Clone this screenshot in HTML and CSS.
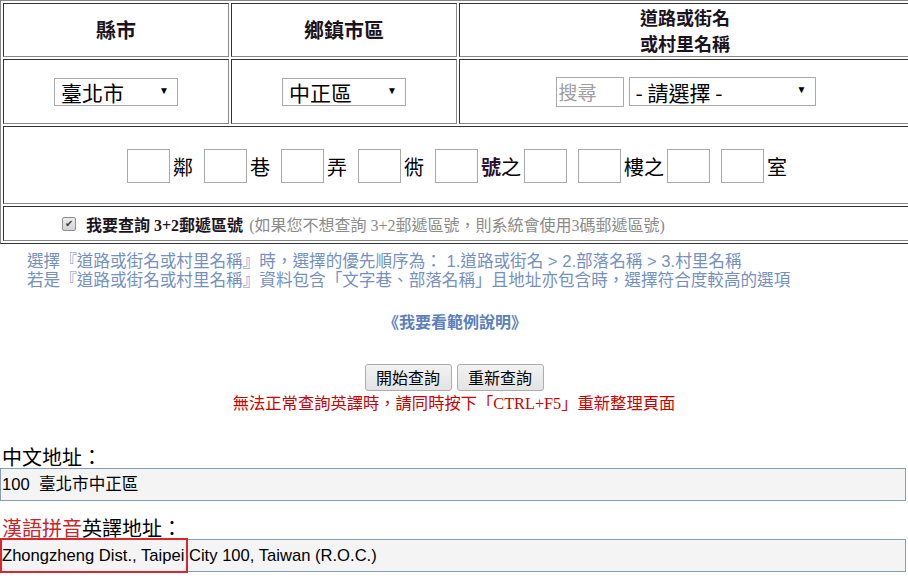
FILE: index.html
```html
<html lang="zh-Hant">

<head>
    <meta charset="UTF-8">
    <meta name="viewport" content="width=device-width, initial-scale=1.0">
    <title>郵遞區號查詢</title>
    <link rel="stylesheet" href="styles.css">
</head>

<body>
    <div class="frame">
        <table class="zip">
            <tr class="head">
                <th class="col-city">縣市</th>
                <th class="col-area">鄉鎮市區</th>
                <th class="col-road">
                    <div class="two-line">
                        <span>道路或街名</span>
                        <span>或村里名稱</span>
                    </div>
                </th>
            </tr>
            <tr class="pick">
                <td>
                    <span class="sel sel-short">
                        <select>
                            <option>臺北市</option>
                        </select>
                    </span>
                </td>
                <td>
                    <span class="sel sel-short">
                        <select>
                            <option>中正區</option>
                        </select>
                    </span>
                </td>
                <td>
                    <div class="road">
                        <input class="search" type="text" placeholder="搜尋">
                        <span class="sel sel-long">
                            <select>
                                <option>- 請選擇 -</option>
                            </select>
                        </span>
                    </div>
                </td>
            </tr>
            <tr class="detail">
                <td colspan="3">
                    <div class="parts">
                        <span class="unit"><input class="box" type="text">鄰</span>
                        <span class="unit"><input class="box" type="text">巷</span>
                        <span class="unit"><input class="box" type="text">弄</span>
                        <span class="unit"><input class="box" type="text">衖</span>
                        <span class="unit"><input class="box" type="text"><span><b class="hao">號</b>之</span><input class="box" type="text"></span>
                        <span class="unit"><input class="box" type="text">樓之<input class="box" type="text"></span>
                        <span class="unit"><input class="box" type="text">室</span>
                    </div>
                </td>
            </tr>
            <tr class="opt">
                <td colspan="3">
                    <label class="check-row">
                        <span class="check">✔</span>
                        <b class="check-title">我要查詢 3+2郵遞區號</b>
                        <span class="check-hint">(如果您不想查詢 3+2郵遞區號，則系統會使用3碼郵遞區號)</span>
                    </label>
                </td>
            </tr>
        </table>
    </div>

    <div class="notes">
        <div>選擇『道路或街名或村里名稱』時，選擇的優先順序為： 1.道路或街名 &gt; 2.部落名稱 &gt; 3.村里名稱</div>
        <div>若是『道路或街名或村里名稱』資料包含「文字巷、部落名稱」且地址亦包含時，選擇符合度較高的選項</div>
    </div>

    <div class="example">《我要看範例說明》</div>

    <div class="actions">
        <button type="button">開始查詢</button>
        <button type="button">重新查詢</button>
    </div>
    <div class="warn">無法正常查詢英譯時，請同時按下「<span class="serif">CTRL+F5</span>」重新整理頁面</div>

    <div class="result">
        <div class="result-label">中文地址：</div>
        <div class="result-box">100&nbsp; 臺北市中正區</div>
        <div class="result-label label-en"><span class="red">漢語拼音</span>英譯地址：</div>
        <div class="result-box">Zhongzheng Dist., Taipei City 100, Taiwan (R.O.C.)<span class="mark"></span></div>
    </div>
</body>

</html>
```

FILE: styles.css
```css
body {
    margin: 0;
    font-family: "Liberation Sans", "Noto Sans CJK TC", sans-serif;
    color: #000;
    background: #fff;
}

.frame {
    overflow: hidden;
    width: 908px;
}

.zip {
    width: 914px;
    border-collapse: separate;
    border-spacing: 2px;
    border: 1px solid;
    border-color: #888 #333 #333 #888;
    table-layout: fixed;
}

.zip th,
.zip td {
    box-sizing: border-box;
    border: 1px solid;
    border-color: #333 #888 #888 #333;
    padding: 0;
    text-align: center;
    vertical-align: middle;
}

.col-city,
.col-area {
    width: 226px;
}

.head th {
    height: 53px;
    font-size: 20px;
    line-height: 24px;
    font-weight: bold;
    color: #1b1320;
    font-family: "Noto Sans CJK TC", sans-serif;
}

.two-line {
    display: flex;
    flex-direction: column;
    align-items: center;
    font-size: 18px;
    line-height: 26px;
}

.pick td {
    height: 65px;
}

.detail td {
    height: 78px;
}

.opt td {
    height: 35px;
    text-align: left;
}

.sel {
    position: relative;
    display: inline-block;
    vertical-align: middle;
}

.sel select {
    appearance: none;
    -webkit-appearance: none;
    box-sizing: border-box;
    height: 28px;
    border: 1px solid #a9a9a9;
    border-radius: 0;
    background: #fff;
    padding: 0 0 0 6px;
    margin: 0;
    font-family: "Noto Sans CJK TC", sans-serif;
    font-size: 21px;
    line-height: 26px;
    color: #000;
}

.sel::after {
    content: "▼";
    position: absolute;
    right: 9px;
    top: 8px;
    font-size: 10px;
    line-height: 10px;
    color: #000;
    pointer-events: none;
}

.sel-short select {
    width: 124px;
}

.sel-long select {
    width: 187px;
    height: 29px;
}

.road {
    display: flex;
    justify-content: center;
    align-items: center;
    gap: 5px;
    padding-left: 1px;
}

.search {
    box-sizing: border-box;
    width: 68px;
    height: 30px;
    border: 1px solid #a9a9a9;
    margin: 0;
    padding: 0 0 0 2px;
    font-family: "Noto Sans CJK TC", sans-serif;
    font-size: 19px;
}

.search::placeholder {
    color: #a0a0a0;
}

.parts {
    display: flex;
    justify-content: center;
    align-items: center;
    gap: 11px;
    font-family: "Noto Sans CJK TC", sans-serif;
    font-size: 20px;
    padding-top: 2px;
}

.unit {
    display: flex;
    align-items: center;
    gap: 3px;
}

.box {
    box-sizing: border-box;
    width: 43px;
    height: 34px;
    border: 1px solid #a9a9a9;
    margin: 0;
    padding: 0;
}

.hao {
    color: #2a0f33;
}

.check-row {
    display: flex;
    align-items: center;
    padding-left: 58px;
    font-size: 16px;
    font-family: "Liberation Serif", "Noto Sans CJK TC", serif;
}

.check {
    box-sizing: border-box;
    width: 14px;
    height: 14px;
    border: 1px solid #8f8f8f;
    border-radius: 2px;
    background: linear-gradient(#ececec, #d4d4d4);
    color: #3c3c3c;
    font-size: 10px;
    line-height: 12px;
    text-align: center;
    margin-right: 10px;
}

.check-title {
    color: #1b1320;
    margin-right: 6px;
}

.check-hint {
    color: #8a8a8a;
}

.notes {
    margin-top: 8px;
    padding-left: 27px;
    font-size: 16.6px;
    line-height: 19px;
    color: #7490c2;
}

.example {
    margin-top: 21px;
    text-align: center;
    font-size: 16px;
    line-height: 20px;
    font-weight: bold;
    color: #5c7fbd;
    font-family: "Noto Sans CJK TC", sans-serif;
    padding-left: 2px;
}

.actions {
    margin-top: 33px;
    display: flex;
    justify-content: center;
    gap: 5px;
}

.actions button {
    box-sizing: border-box;
    width: 87px;
    height: 27px;
    border: 1px solid #acacac;
    border-radius: 3px;
    background: linear-gradient(#f2f2f2, #e3e3e3);
    font-family: "Noto Sans CJK TC", sans-serif;
    font-size: 16px;
    line-height: 23px;
    padding: 0;
    color: #000;
}

.warn {
    margin-top: 1px;
    text-align: center;
    font-size: 16.3px;
    line-height: 20px;
    color: #cc0000;
    font-family: "Noto Sans CJK TC", sans-serif;
}

.serif {
    font-family: "Liberation Serif", serif;
}

.result {
    margin-top: 32px;
}

.result-label {
    font-size: 20px;
    line-height: 22px;
    padding-left: 2px;
    font-family: "Noto Sans CJK TC", sans-serif;
}

.label-en {
    margin-top: 16px;
}

.red {
    color: #c8262c;
}

.result-box {
    position: relative;
    box-sizing: border-box;
    width: 906px;
    height: 33px;
    border: 1px solid #869db3;
    background: #f4f4f4;
    padding-left: 1px;
    font-size: 16.6px;
    line-height: 31px;
}

.mark {
    position: absolute;
    left: -1px;
    top: -2px;
    width: 188px;
    height: 35px;
    box-sizing: border-box;
    border: 2px solid #d9262f;
}
```
